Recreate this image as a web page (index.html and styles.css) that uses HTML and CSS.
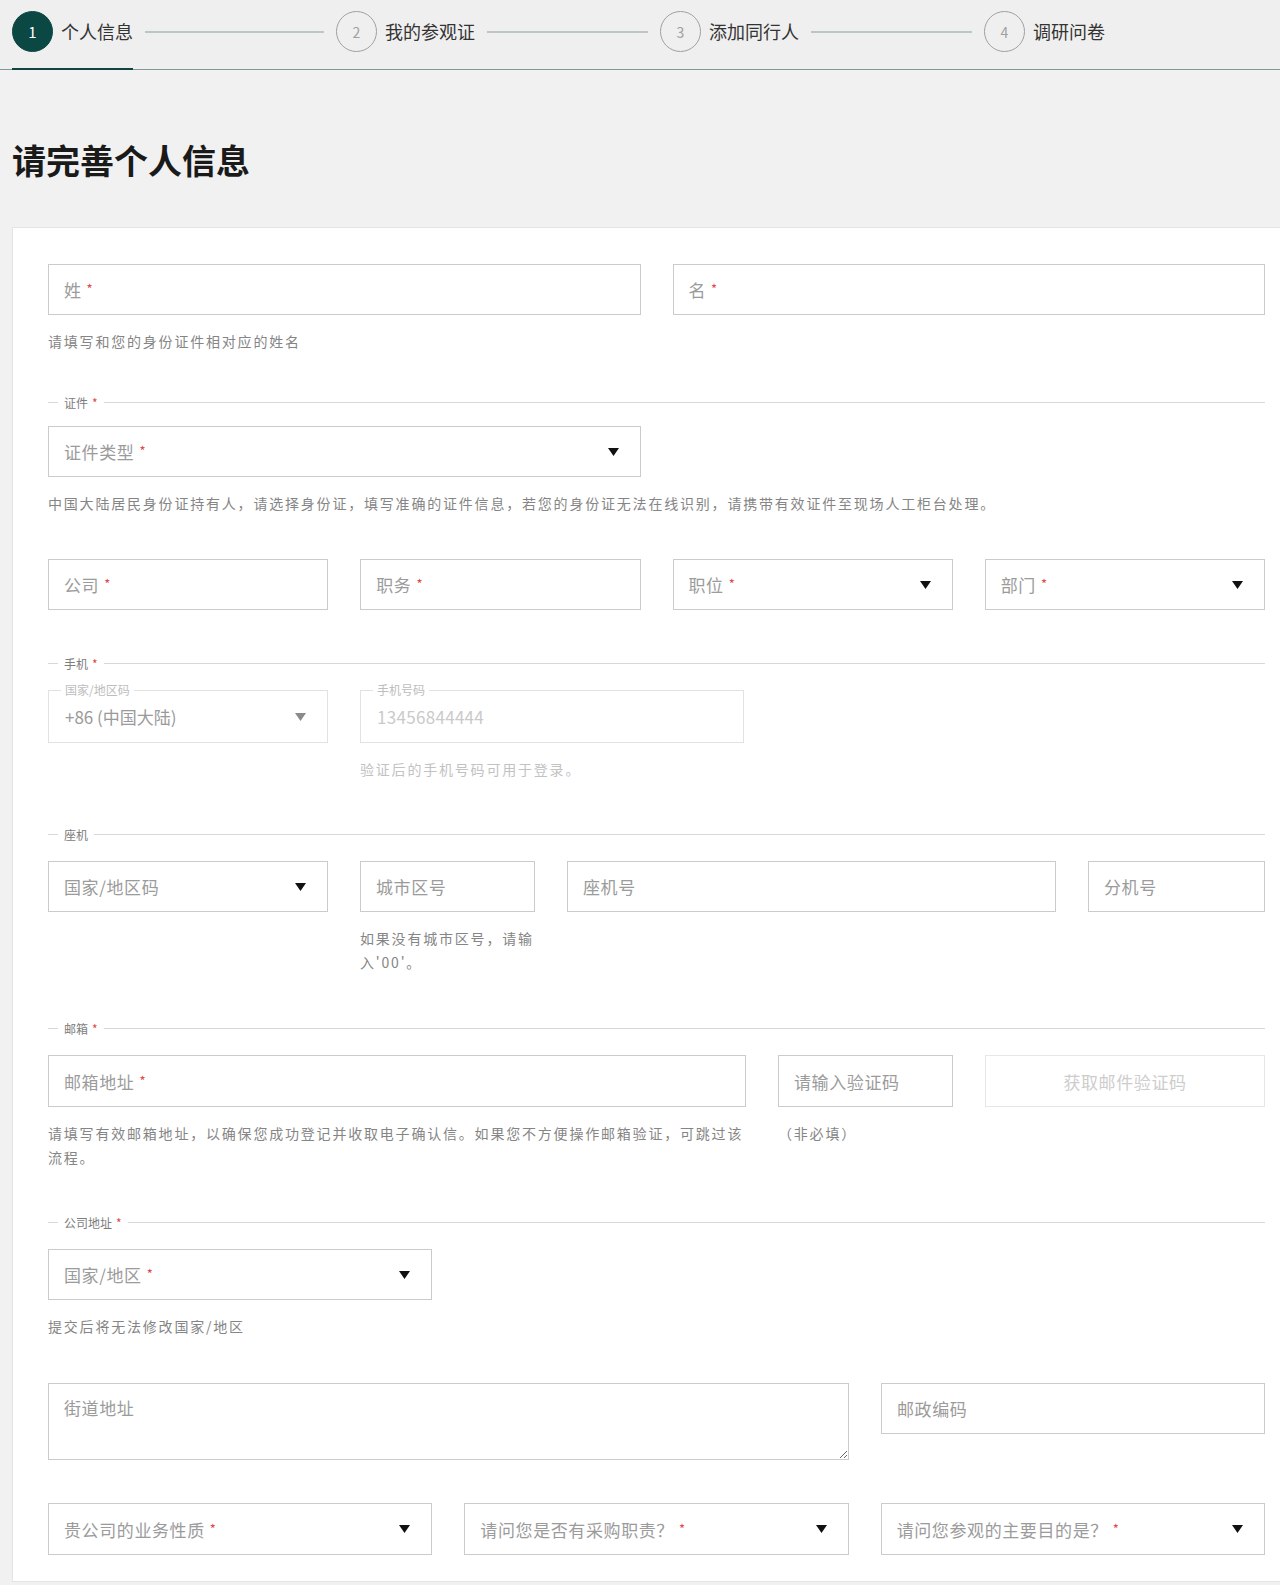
FILE: index.html
```html
<!DOCTYPE html>
<html lang="zh-CN">
<head>
<meta charset="utf-8">
<title>请完善个人信息</title>
<link rel="stylesheet" href="styles.css">
</head>
<body>
<header class="steps">
  <div class="step active">
    <div class="step-head"><span class="step-num">1</span><span class="step-label">个人信息</span></div>
    <span class="step-line"></span>
  </div>
  <div class="step">
    <div class="step-head"><span class="step-num">2</span><span class="step-label">我的参观证</span></div>
    <span class="step-line"></span>
  </div>
  <div class="step">
    <div class="step-head"><span class="step-num">3</span><span class="step-label">添加同行人</span></div>
    <span class="step-line"></span>
  </div>
  <div class="step">
    <div class="step-head"><span class="step-num">4</span><span class="step-label">调研问卷</span></div>
  </div>
</header>

<main class="page">
  <h1 class="title">请完善个人信息</h1>

  <form class="card">
    <section class="block">
      <div class="grid g2">
        <div class="field"><span class="ph">姓<i class="req">*</i></span></div>
        <div class="field"><span class="ph">名<i class="req">*</i></span></div>
      </div>
      <p class="help">请填写和您的身份证件相对应的姓名</p>
    </section>

    <section class="block b-id">
      <div class="legend"><span>证件<i class="req">*</i></span></div>
      <div class="grid g2">
        <div class="field select"><span class="ph">证件类型<i class="req">*</i></span><svg class="caret" viewBox="0 0 11 8"><path d="M0 0H11L5.5 8Z"/></svg></div>
      </div>
      <p class="help">中国大陆居民身份证持有人，请选择身份证，填写准确的证件信息，若您的身份证无法在线识别，请携带有效证件至现场人工柜台处理。</p>
    </section>

    <section class="block b-row4">
      <div class="grid g4">
        <div class="field"><span class="ph">公司<i class="req">*</i></span></div>
        <div class="field"><span class="ph">职务<i class="req">*</i></span></div>
        <div class="field select"><span class="ph">职位<i class="req">*</i></span><svg class="caret" viewBox="0 0 11 8"><path d="M0 0H11L5.5 8Z"/></svg></div>
        <div class="field select"><span class="ph">部门<i class="req">*</i></span><svg class="caret" viewBox="0 0 11 8"><path d="M0 0H11L5.5 8Z"/></svg></div>
      </div>
    </section>

    <section class="block b-phone">
      <div class="legend"><span>手机<i class="req">*</i></span></div>
      <div class="grid g-phone">
        <div class="cell">
          <fieldset class="ofield">
            <legend>国家/地区码</legend>
            <span class="val">+86 (中国大陆)</span>
            <svg class="caret muted" viewBox="0 0 11 8"><path d="M0 0H11L5.5 8Z"/></svg>
          </fieldset>
        </div>
        <div class="cell">
          <fieldset class="ofield">
            <legend>手机号码</legend>
            <span class="val light">13456844444</span>
          </fieldset>
          <p class="help light">验证后的手机号码可用于登录。</p>
        </div>
      </div>
    </section>

    <section class="block">
      <div class="legend"><span>座机</span></div>
      <div class="grid g-tel">
        <div class="cell">
          <div class="field select"><span class="ph">国家/地区码</span><svg class="caret" viewBox="0 0 11 8"><path d="M0 0H11L5.5 8Z"/></svg></div>
        </div>
        <div class="cell">
          <div class="field"><span class="ph">城市区号</span></div>
          <p class="help narrow">如果没有城市区号，请输入'00'。</p>
        </div>
        <div class="cell">
          <div class="field"><span class="ph">座机号</span></div>
        </div>
        <div class="cell">
          <div class="field"><span class="ph">分机号</span></div>
        </div>
      </div>
    </section>

    <section class="block b-mail">
      <div class="legend"><span>邮箱<i class="req">*</i></span></div>
      <div class="grid g-mail">
        <div class="cell">
          <div class="field tall"><span class="ph">邮箱地址<i class="req">*</i></span></div>
          <p class="help">请填写有效邮箱地址，以确保您成功登记并收取电子确认信。如果您不方便操作邮箱验证，可跳过该流程。</p>
        </div>
        <div class="cell">
          <div class="field tall"><span class="ph">请输入验证码</span></div>
          <p class="help">（非必填）</p>
        </div>
        <div class="cell">
          <button type="button" class="btn-code">获取邮件验证码</button>
        </div>
      </div>
    </section>

    <section class="block">
      <div class="legend"><span>公司地址<i class="req">*</i></span></div>
      <div class="grid g3">
        <div class="field select"><span class="ph">国家/地区<i class="req">*</i></span><svg class="caret" viewBox="0 0 11 8"><path d="M0 0H11L5.5 8Z"/></svg></div>
      </div>
      <p class="help">提交后将无法修改国家/地区</p>
    </section>

    <section class="block b-addr">
      <div class="grid g-addr">
        <textarea class="area" placeholder="街道地址"></textarea>
        <div class="field"><span class="ph">邮政编码</span></div>
      </div>
    </section>

    <section class="block b-last">
      <div class="grid g3">
        <div class="field select"><span class="ph">贵公司的业务性质<i class="req">*</i></span><svg class="caret" viewBox="0 0 11 8"><path d="M0 0H11L5.5 8Z"/></svg></div>
        <div class="field select"><span class="ph">请问您是否有采购职责？<i class="req">*</i></span><svg class="caret" viewBox="0 0 11 8"><path d="M0 0H11L5.5 8Z"/></svg></div>
        <div class="field select"><span class="ph">请问您参观的主要目的是？<i class="req">*</i></span><svg class="caret" viewBox="0 0 11 8"><path d="M0 0H11L5.5 8Z"/></svg></div>
      </div>
    </section>
  </form>
</main>
</body>
</html>
```

FILE: styles.css
```css
* { box-sizing: border-box; }
html, body { margin: 0; }
body {
  background: #f1f1f1;
  font-family: "Noto Sans CJK SC", "Noto Sans", sans-serif;
  color: #333;
}

/* ---------- step header ---------- */
.steps {
  display: flex;
  height: 70px;
  padding-left: 12px;
  border-bottom: 1px solid #7f9997;
  background: #efefef;
}
.step {
  display: flex;
  align-items: flex-start;
  width: 324px;
  flex-shrink: 0;
  padding-top: 11px;
}
.step-head {
  display: flex;
  gap: 8px;
  align-self: stretch;
  border-bottom: 2px solid transparent;
  margin-bottom: -1px;
}
.step.active .step-head { border-bottom-color: #0f4540; }
.step-num {
  width: 41px;
  height: 41px;
  flex-shrink: 0;
  border-radius: 50%;
  border: 1.5px solid #a0a0a0;
  display: flex;
  align-items: center;
  justify-content: center;
  font-size: 14px;
  color: #a0a0a0;
}
.step.active .step-num {
  background: #0b4843;
  border-color: #0b4843;
  color: #fff;
  font-size: 15px;
}
.step-label {
  font-size: 18px;
  line-height: 41px;
  color: #333;
}
.step-line {
  flex: 1;
  height: 2px;
  background: #bac7c6;
  margin: 20px 12px 0;
}

/* ---------- page ---------- */
.page { padding-left: 12px; }
.title {
  margin: 70px 0 0;
  font-size: 34px;
  line-height: 40px;
  font-weight: 700;
  color: #1a1a1a;
}
.card {
  margin: 47px 0 0;
  background: #fff;
  border: 1px solid #e4e4e4;
  border-right: none;
  padding: 36px 15px 26px 35px;
}

.block { margin-top: 45px; }
.block:first-child { margin-top: 0; }
.b-id { margin-top: 41px; }
.b-row4 { margin-top: 44px; }
.b-mail { margin-top: 46px; }
.b-addr { margin-top: 45px; }
.b-last { margin-top: 43px; }

.grid { display: grid; column-gap: 32px; }
.g2 { grid-template-columns: 1fr 1fr; }
.g3 { grid-template-columns: 1fr 1fr 1fr; }
.g4 { grid-template-columns: 1fr 1fr 1fr 1fr; }
.g-phone { grid-template-columns: 280px 384px; }
.g-tel { grid-template-columns: 280px 175px 1fr 177px; }
.g-mail { grid-template-columns: 1fr 175px 280px; }
.g-addr { grid-template-columns: 1fr 384px; align-items: start; }

.cell { min-width: 0; }

/* section legend */
.legend {
  display: flex;
  align-items: center;
  height: 16px;
  margin-bottom: 19px;
  font-size: 12px;
  color: #7c7c7c;
}
.legend::before {
  content: "";
  width: 10px;
  height: 1px;
  background: #d8d8d8;
  margin-right: 6px;
}
.legend::after {
  content: "";
  flex: 1;
  height: 1px;
  background: #d8d8d8;
  margin-left: 6px;
}
.legend .req { font-size: 12px; vertical-align: 0; margin-left: 4px; }
.b-id .legend { margin-bottom: 16px; }
.b-phone .legend { margin-bottom: 12px; }

/* inputs */
.field {
  display: flex;
  align-items: center;
  height: 51px;
  border: 1.5px solid #cbcbcb;
  padding: 0 21px 0 15px;
  background: #fff;
  font-size: 17px;
  letter-spacing: 0.6px;
  color: #9b9b9b;
}
.field.tall { height: 52px; }
.b-last .field { height: 52px; }
.ph { white-space: nowrap; }
.req {
  font-style: normal;
  color: #e0474c;
  font-size: 13px;
  margin-left: 5px;
  vertical-align: 3px;
  letter-spacing: 0;
}
.caret {
  width: 11px;
  height: 8px;
  margin-left: auto;
  flex-shrink: 0;
  fill: #111;
}
.caret.muted { fill: #8a8a8a; }

/* outlined (fieldset) inputs */
.ofield {
  margin: 0;
  min-width: 0;
  height: 60px;
  display: flex;
  align-items: center;
  padding: 0 21px 6px 12px;
  border: 1px solid #e2e2e2;
}
.ofield legend {
  padding: 0 4px;
  font-size: 12px;
  line-height: 14px;
  color: #bdbdbd;
}
.val {
  padding-left: 4px;
  font-size: 17px;
  color: #9a9a9a;
}
.val.light { color: #cacaca; letter-spacing: 0.3px; }

/* helper text */
.help {
  margin: 14px 0 0;
  font-size: 14px;
  letter-spacing: 1.8px;
  line-height: 24px;
  color: #858585;
}
.help.light { color: #c2c2c2; }
.help.narrow { margin-right: -6px; }

/* code button */
.btn-code {
  display: block;
  width: 100%;
  height: 52px;
  border: 1.5px solid #e6e6e6;
  background: #fff;
  font-family: inherit;
  font-size: 17px;
  letter-spacing: 0.6px;
  color: #cdcdcd;
}

/* textarea */
.area {
  display: block;
  width: 100%;
  height: 77px;
  border: 1.5px solid #cbcbcb;
  padding: 11px 15px;
  font-family: inherit;
  font-size: 17px;
  letter-spacing: 0.6px;
  line-height: 26px;
  color: #333;
  background: #fff;
  outline: none;
}
.area::placeholder { color: #9b9b9b; }
```
